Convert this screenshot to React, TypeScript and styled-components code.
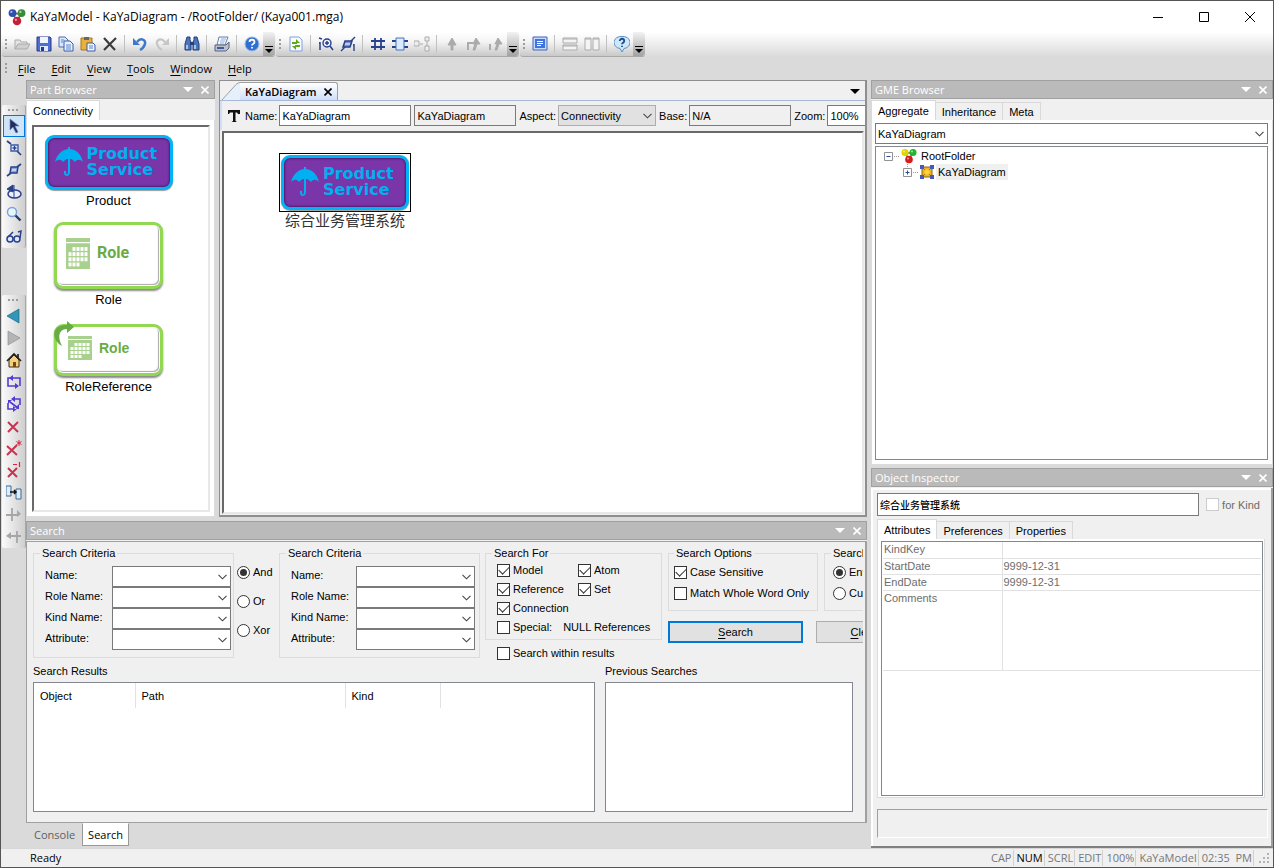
import React from 'react';
import styled, { createGlobalStyle, css } from 'styled-components';

const uiFont = '"Open Sans", "Noto Sans", "Noto Sans CJK SC", sans-serif';
const formFont = '"Liberation Sans", "Noto Sans CJK SC", sans-serif';

const Global = createGlobalStyle`
  * { box-sizing: border-box; }
  body { margin: 0; background: #dadada; color: #000; font: 11px/16px ${formFont}; }
  button, input, select, textarea { font: inherit; color: inherit; margin: 0; }
  button { border: 0; padding: 0; background: none; }
  svg { flex: none; }
  u { text-underline-offset: 2px; }
`;

/* ---------- frame ---------- */

const Frame = styled.div`
  display: flex;
  flex-direction: column;
  min-height: 100vh;
  border: 1px solid #555;
  background: #dadada;
`;
const TitleBar = styled.header`
  display: flex;
  align-items: center;
  height: 31px;
  padding-left: 7px;
  background: #fff;
  font: 12px/16px ${uiFont};
`;
const Title = styled.h1`
  flex: 1;
  margin: 0 0 0 4px;
  font: inherit;
`;
const CaptionButton = styled.button`
  display: grid;
  place-items: center;
  width: 46px;
  height: 30px;
`;
const ToolRow = styled.div`
  display: flex;
  gap: 1px;
  height: 25px;
  padding-left: 1px;
  background: linear-gradient(#fff, #dadada);
`;
const ToolStrip = styled.div<{ $vertical?: boolean }>`
  display: flex;
  align-items: center;
  ${p => p.$vertical ? css`
    flex-direction: column;
    width: 24px;
    padding-bottom: 1px;
    margin-bottom: 47px;
    border-radius: 2px;
    border-right: 1px solid #a8a8a8;
    background: linear-gradient(90deg, #fafafa, #cfcfcf);
  ` : css`
    height: 25px;
    border-radius: 3px;
    border-bottom: 1px solid #a8a8a8;
    background: linear-gradient(#fff, #f4f4f4 40%, #c9c9c9);
  `}
`;
const Grip = styled.span<{ $vertical?: boolean }>`
  ${p => p.$vertical
    ? 'width: 11px; height: 2px; margin: 4px 0; background: repeating-linear-gradient(90deg, #9c9c9c 0 2px, transparent 2px 4px);'
    : 'width: 2px; height: 11px; margin: 0 4px 0 3px; background: repeating-linear-gradient(#9c9c9c 0 2px, transparent 2px 4px);'}
`;
const ToolButton = styled.button<{ $active?: boolean }>`
  display: grid;
  place-items: center;
  width: 22px;
  height: 22px;
  ${p => p.$active && 'border: 1px solid #0078d7; background: #cfe4f7;'}
`;
const Divider = styled.span`
  width: 1px;
  height: 18px;
  margin: 0 4px 0 3px;
  background: #c0c0c0;
`;
const Overflow = styled.button`
  display: flex;
  align-items: flex-end;
  justify-content: center;
  align-self: stretch;
  width: 12px;
  padding-bottom: 2px;
  border-radius: 0 4px 4px 0;
  background: linear-gradient(#f2f2f2, #a2a2a2);
`;
const MenuBar = styled.nav`
  display: flex;
  align-items: center;
  height: 23px;
  padding-left: 1px;
  font: 11px/16px ${uiFont};
`;
const MenuItem = styled.button`
  padding: 0 7px;
  margin-right: 2px;
`;
const Workspace = styled.main`
  flex: 1;
  display: grid;
  grid-template-columns: 25px minmax(0, 845fr) minmax(0, 402fr);
  grid-template-rows: minmax(0, 1fr);
`;
const Rail = styled.aside`
  padding: 25px 0 0 1px;
`;
const Center = styled.div`
  display: flex;
  flex-direction: column;
  min-width: 0;
  margin-right: 4px;
`;
const Upper = styled.div`
  flex: 1;
  display: flex;
  gap: 4px;
  margin-bottom: 4px;
`;
const Right = styled.div`
  display: flex;
  flex-direction: column;
  gap: 3px;
  min-width: 0;
`;

/* ---------- panels ---------- */

const Panel = styled.section<{ $width?: number; $grow?: boolean }>`
  display: flex;
  flex-direction: column;
  min-width: 0;
  ${p => p.$width && `width: ${p.$width}px; flex: none;`}
  ${p => p.$grow && 'flex: 1;'}
  background: #f0f0f0;
`;
const PanelHead = styled.div`
  display: flex;
  align-items: center;
  gap: 5px;
  height: 19px;
  padding: 0 3px;
  border: 1px solid #a0a0a0;
  background: #bababa;
  color: #fff;
  font: 11px/16px ${uiFont};
`;
const PanelTitle = styled.h2`
  flex: 1;
  margin: 0;
  font: inherit;
`;
const HeadButton = styled.button`
  display: grid;
  place-items: center;
  width: 12px;
  height: 14px;
`;
const TabRow = styled.div`
  display: flex;
  align-items: flex-end;
  height: 21px;
`;
const Tab = styled.button<{ $on?: boolean }>`
  height: ${p => (p.$on ? 20 : 18)}px;
  padding: 0 6px;
  border: 1px solid #d9d9d9;
  border-left-width: ${p => (p.$on ? 1 : 0)}px;
  border-bottom: 0;
  background: ${p => (p.$on ? '#fff' : '#f0f0f0')};
  white-space: nowrap;
`;
const TabPage = styled.div`
  flex: 1;
  display: flex;
  flex-direction: column;
  min-width: 0;
  gap: 2px;
  padding: 3px 4px 4px 3px;
  border: 1px solid #dcdcdc;
  border-top: 0;
  background: #fff;
`;
const PartList = styled.div`
  flex: 1;
  display: flex;
  flex-direction: column;
  align-items: center;
  margin: 2px 0 0 2px;
  padding: 8px 25px 0 0;
  border: 2px solid #e8e8e8;
  border-top-color: #696969;
  border-left-color: #696969;
  background: #fff;
`;
const Part = styled.figure`
  display: flex;
  flex-direction: column;
  align-items: center;
  margin: 0 0 12px;
`;
const PartName = styled.figcaption`
  margin-top: 2px;
  font: 13px/18px ${formFont};
`;

/* ---------- model tiles ---------- */

const ProductBox = styled.div`
  display: flex;
  align-items: center;
  gap: 4px;
  width: 128px;
  height: 55px;
  padding: 0 0 2px 7px;
  border: 3px solid #00b4f5;
  border-radius: 9px;
  background: #7a35a8;
  box-shadow: inset 0 0 2px 1px #4c1c74, 0 1px 1px #999;
  color: #00b0f0;
  font: bold 16px/16px "DejaVu Sans", sans-serif;
`;
const RoleBox = styled.div<{ $ref?: boolean }>`
  display: flex;
  align-items: center;
  gap: ${p => (p.$ref ? 7 : 7)}px;
  width: 109px;
  height: ${p => (p.$ref ? 52 : 67)}px;
  padding: ${p => (p.$ref ? '0 0 5px 11px' : '0 0 5px 9px')};
  border: 3px solid #92d850;
  border-radius: 9px;
  background: #fff;
  box-shadow: inset 0 0 0 1px #fff, inset -1px -1px 1px 1px #aaa, 0 2px 2px #888;
  color: #69ab45;
  font: ${p => (p.$ref ? 'bold 14px/16px "Liberation Sans"' : 'bold 16px/18px Roboto')}, sans-serif;
`;
const RefWrap = styled.div`
  position: relative;
  padding-top: 3px;
`;
const RefArrow = styled.svg`
  position: absolute;
  left: 0;
  top: 0;
`;

const ProductTile = () => (
  <ProductBox>
    <svg width="28" height="30" viewBox="0 0 28 30" aria-hidden="true">
      <path fill="#00b0f0" d="M0 15C2 7 7 3 13 2V0h2v2c7 1 11 5 13 13-3-3-6-3-8 0-2-2-3-3-5-3v13c0 5-6 5-6 1v-2h2v2c0 2 2 2 2-1V12c-2 0-3 1-5 3-2-3-5-3-8 0z" />
    </svg>
    <span>Product<br />Service</span>
  </ProductBox>
);
const CalendarIcon = ({ tall }: { tall?: boolean }) => (
  <svg width="24" height={tall ? 31 : 24} viewBox="0 0 24 24" preserveAspectRatio="none" aria-hidden="true">
    <path fill="#a9d18e" d="M0 0h24v3H0zM0 4h24v20H0z" />
    <g fill="#fff">
      {[0, 1, 2, 3].map(r => [0, 1, 2, 3, 4].map(c =>
        (r === 0 && c === 0) || (r === 3 && c > 2) ? null : <rect key={`${r}${c}`} x={2.5 + c * 4} y={7 + r * 4} width="3" height="3" />))}
    </g>
  </svg>
);

/* ---------- editor ---------- */

const Editor = styled.section`
  flex: 1;
  display: flex;
  flex-direction: column;
  min-width: 0;
  border: 1px solid #8f8f8f;
  border-width: 1px 2px 2px 1px;
  background: #f0f0f0;
`;
const EditorTabs = styled.div`
  display: flex;
  align-items: flex-end;
  height: 20px;
  border-bottom: 1px solid #a8b8d8;
`;
const EditorTab = styled.button`
  display: flex;
  align-items: center;
  gap: 7px;
  height: 18px;
  padding: 0 5px;
  border: 1px solid #a0a0a0;
  border-width: 1px 1px 0 0;
  border-radius: 0 3px 0 0;
  background: linear-gradient(#fff, #cfdff8);
  font: 600 11px/16px ${uiFont};
`;
const EditorMenu = styled.button`
  display: grid;
  place-items: center;
  width: 20px;
  height: 18px;
  margin-left: auto;
`;
const EditorBar = styled.div`
  display: flex;
  align-items: center;
  gap: 3px;
  height: 29px;
  padding-left: 6px;
  border-left: 2px solid #cfdff8;
  overflow: hidden;
  white-space: nowrap;
`;
const Field = styled.label`
  display: flex;
  align-items: center;
  gap: 2px;
  flex: none;
`;
const TextBox = styled.input<{ $width?: number; $dim?: boolean; $height?: number }>`
  ${p => (p.$width ? `flex: none; width: ${p.$width}px;` : 'flex: 1; min-width: 0;')}
  height: ${p => p.$height ?? 21}px;
  padding: 0 2px;
  border: 1px solid #7a7a7a;
  border-radius: 0;
  background: ${p => (p.$dim ? '#f0f0f0' : '#fff')};
`;
const ObjectName = styled(TextBox)`
  font-size: 10px;
  font-weight: 500;
`;
const Canvas = styled.div`
  flex: 1;
  position: relative;
  margin: 1px 1px 1px 2px;
  border: 2px solid #e8e8e8;
  border-top-color: #696969;
  border-left-color: #696969;
  background: #fff;
`;
const CanvasNode = styled.figure`
  position: absolute;
  left: 55px;
  top: 20px;
  display: flex;
  flex-direction: column;
  align-items: center;
  margin: 0;
`;
const NodeFrame = styled.div`
  padding: 1px 1px 0;
  border: 1px solid #000;
  height: 59px;
`;
const NodeName = styled.figcaption`
  font: 15px/16px "Noto Sans CJK SC", sans-serif;
  color: #333;
`;

/* ---------- form controls ---------- */

const ComboWrap = styled.span<{ $width?: number }>`
  display: grid;
  align-items: center;
  width: ${p => (p.$width ? p.$width + 'px' : '100%')};
  > * { grid-area: 1 / 1; }
  > svg { justify-self: end; margin-right: 4px; pointer-events: none; }
`;
const ComboBox = styled.select<{ $gray?: boolean }>`
  appearance: none;
  width: 100%;
  height: 21px;
  padding: 0 2px;
  border: 1px solid ${p => (p.$gray ? '#adadad' : '#7a7a7a')};
  border-radius: 0;
  background: ${p => (p.$gray ? '#e1e1e1' : '#fff')};
`;
const Combo = ({ value = '', width, gray, label }: { value?: string; width?: number; gray?: boolean; label?: string }) => (
  <ComboWrap $width={width}>
    <ComboBox $gray={gray} aria-label={label} defaultValue={value}><option>{value}</option></ComboBox>
    <svg width="9" height="6" viewBox="0 0 9 6" aria-hidden="true"><path d="M.5.8l4 4 4-4" fill="none" stroke="#444" strokeWidth="1.1" /></svg>
  </ComboWrap>
);
const CheckLabel = styled.label<{ $dim?: boolean }>`
  display: flex;
  align-items: center;
  gap: 3px;
  flex: none;
  white-space: nowrap;
  color: ${p => (p.$dim ? '#6d6d6d' : '#000')};
`;
const Tick = styled.input`
  appearance: none;
  display: grid;
  place-items: center;
  flex: none;
  width: 13px;
  height: 13px;
  border: 1px solid #333;
  background: #fff;
  &:disabled { border-color: #ccc; }
  &[type='radio'] { border-radius: 50%; }
  &[type='radio']:checked::after { content: ''; width: 7px; height: 7px; border-radius: 50%; background: #333; }
  &[type='checkbox']:checked::after {
    content: '';
    width: 9px;
    height: 5px;
    border: solid #333;
    border-width: 0 0 1px 1px;
    transform: translateY(-1px) rotate(-45deg);
  }
`;
const Check = ({ children, on, radio, name, dim }: { children: React.ReactNode; on?: boolean; radio?: boolean; name?: string; dim?: boolean }) => (
  <CheckLabel $dim={dim}>
    <Tick type={radio ? 'radio' : 'checkbox'} defaultChecked={on} name={name} disabled={dim} />{children}
  </CheckLabel>
);

/* ---------- search ---------- */

const SearchBody = styled.div`
  padding: 4px 2px 10px 6px;
  border: 1px solid #a0a0a0;
  border-right-width: 2px;
  margin-top: 1px;
`;
const SearchForm = styled.form`
  display: flex;
  align-items: flex-start;
  height: 117px;
  overflow: hidden;
`;
const Group = styled.fieldset<{ $width: number; $height: number; $pad?: number; $end?: number; $inset?: number }>`
  flex: none;
  width: ${p => p.$width}px;
  height: ${p => p.$height}px;
  margin: 0 0 0 ${p => p.$inset ?? 0}px;
  padding: 0 ${p => p.$end ?? 2}px 0 ${p => p.$pad ?? 11}px;
  border: 1px solid #dcdcdc;
`;
const Legend = styled.legend<{ $shift?: number }>`
  margin-left: ${p => -(p.$shift ?? 0)}px;
  padding: 0 2px;
  line-height: 14px;
  white-space: nowrap;
`;
const CriteriaList = styled.div`
  padding-top: 6px;
`;
const CriteriaRow = styled.label`
  display: flex;
  justify-content: space-between;
  height: 21px;
  line-height: 19px;
`;
const Joiners = styled.div`
  display: flex;
  flex: none;
  flex-direction: column;
  gap: 13px;
  width: 45px;
  padding: 18px 0 0 3px;
`;
const Stack = styled.div<{ $left?: number }>`
  flex: none;
  margin-left: ${p => p.$left ?? 0}px;
`;
const KindGrid = styled.div`
  display: grid;
  grid-template-columns: 81px 1fr;
  grid-auto-rows: 18px;
  align-items: center;
  row-gap: 1px;
  padding-top: 1px;
`;
const SpecialRow = styled.div`
  grid-column: 1 / 3;
  display: flex;
  gap: 11px;
`;
const OptionStack = styled.div`
  display: flex;
  flex-direction: column;
  gap: 5px;
  padding-top: 4px;
`;
const PushButton = styled.button<{ $primary?: boolean }>`
  display: block;
  width: 135px;
  height: 22px;
  margin-top: 10px;
  border: ${p => (p.$primary ? '2px solid #0078d7' : '1px solid #adadad')};
  background: #e1e1e1;
`;
const Within = styled.div`
  padding: 5px 0 0 12px;
`;
const Lists = styled.div`
  display: grid;
  grid-template-columns: 562fr 248fr;
  column-gap: 10px;
  margin-right: 10px;
`;
const ListTitle = styled.h3`
  margin: 0;
  padding-bottom: 3px;
  font: inherit;
`;
const ListBox = styled.div`
  height: 130px;
  border: 1px solid #828790;
  background: #fff;
`;
const ResultTable = styled.table`
  border-collapse: collapse;
  th { height: 25px; padding: 0 6px; border-right: 1px solid #e2e2e2; font-weight: normal; text-align: left; }
`;
const BottomTabs = styled.div`
  display: flex;
  height: 25px;
  padding: 0 0 2px 1px;
  font: 11px/16px ${uiFont};
`;
const BottomTab = styled.button<{ $on?: boolean }>`
  padding: 0 5px;
  ${p => (p.$on ? 'border: 1px solid #999; border-top-color: #fff; background: #fff;' : 'color: #606060; padding: 0 7px;')}
`;

/* ---------- browser and inspector ---------- */

const Tree = styled.ul`
  flex: 1;
  margin: 0;
  padding: 1px 0 0 8px;
  border: 1px solid #828790;
  background: #fff;
  list-style: none;
`;
const TreeRow = styled.li<{ $depth: number }>`
  display: flex;
  align-items: center;
  height: 16px;
  padding-left: ${p => p.$depth * 19}px;
`;
const TreeName = styled.span<{ $on?: boolean }>`
  margin-left: 2px;
  padding: 0 2px;
  background: ${p => (p.$on ? '#f0f0f0' : 'none')};
`;
const Inspector = styled.div`
  display: flex;
  flex-direction: column;
  margin-top: 1px;
  padding: 5px 3px 8px 6px;
  border-right: 2px solid #a0a0a0;
  border-bottom: 2px solid #808080;
  box-shadow: inset 2px 2px #fff;
`;
const NameRow = styled.div`
  display: flex;
  align-items: center;
  gap: 7px;
  padding-right: 8px;
`;
const InspectorTabs = styled(TabRow)`
  height: 23px;
`;
const InspectorPage = styled(TabPage)`
  height: 259px;
  flex: none;
  padding: 2px 1px 1px 3px;
  margin-right: 3px;
`;
const AttrBox = styled.div`
  flex: 1;
  padding: 0 1px;
  border: 1px solid #828790;
`;
const AttrTable = styled.table`
  width: 100%;
  table-layout: fixed;
  border-collapse: collapse;
  color: #6d6d6d;
  line-height: 14px;
  th, td { height: 16px; padding: 0 2px 1px 1px; border-bottom: 1px solid #e2e2e2; text-align: left; font-weight: normal; vertical-align: top; }
  th { width: 119px; border-right: 1px solid #e2e2e2; }
  tr:last-child th { height: 80px; }
`;
const HelpBox = styled.div`
  height: 29px;
  margin-top: 11px;
  border: 1px solid #fff;
  border-top-color: #a0a0a0;
  border-left-color: #a0a0a0;
`;
const StatusBar = styled.footer`
  display: flex;
  align-items: center;
  height: 19px;
  padding: 0 3px;
  border-top: 1px solid #d7d7d7;
  background: #f0f0f0;
  font: 11px/16px ${uiFont};
  > svg { margin-left: 4px; }
`;
const Ready = styled.span`
  flex: 1;
  padding-left: 26px;
`;
const StatusCell = styled.span<{ $on?: boolean }>`
  padding: 0 1px 0 3px;
  border-right: 1px solid #d0d0d0;
  white-space: pre;
  color: ${p => (p.$on ? '#000' : '#777')};
`;

/* ---------- icons ---------- */

const navy = '#27418a';
const mute = '#ababab';
const glyphs: Record<string, React.ReactNode> = {
  open: <><path d="M1 13V4h5l1 2h6v2" fill="#e4e4e4" stroke={mute} /><path d="M1 13l3-5h12l-3 5z" fill="#cfcfcf" stroke={mute} /></>,
  save: <><path d="M1 1h13l1 1v13H1z" fill="#4f6fd0" stroke="#26388c" /><path d="M4 1h8v6H4z" fill="#f0f4ff" /><path d="M4 10h8v5H4z" fill="#dfe6f8" /><path d="M5 11h3v4H5z" fill="#26388c" /></>,
  copy: <><path d="M1 1h6l3 3v7H1z" fill="#dbe8fb" stroke="#4a6cb0" /><path d="M6 5h6l3 3v7H6z" fill="#e8f1ff" stroke="#3a5ca8" /><path d="M8 9h5M8 11h5M8 13h5M3 4h3M3 6h2" stroke="#5b83d0" /></>,
  paste: <><path d="M1 2h11v12H1z" fill="#e8b13a" stroke="#a8741a" /><path d="M4 1h5v3H4z" fill="#666" /><path d="M7 7h6l2 2v6H7z" fill="#eef4ff" stroke="#3a5ca8" /><path d="M9 10h4M9 12h4" stroke="#5b83d0" /></>,
  del: <path d="M2 2l11 12M14 2L2 14" stroke="#3c3c3c" strokeWidth="2.2" />,
  undo: <><path d="M5 6c4-5 9-2 8 2-1 3-3 5-5 6" fill="none" stroke="#3f78c8" strokeWidth="2.4" /><path d="M1 2v7h7z" fill="#3f78c8" /></>,
  redo: <><path d="M11 6C7 1 2 4 3 8c1 3 3 5 5 6" fill="none" stroke="#c6c6c6" strokeWidth="2.200" /><path d="M15 2v7H8z" fill="#c6c6c6" /></>,
  find: <><path d="M3 1h3v3l1 2v8H1V8zM10 1h3l2 7v6H9V6l1-2z" fill="#4c74b8" stroke="#233f7c" /><path d="M6 6h4v3H6z" fill="#233f7c" /><path d="M3 9v4M11 9v4" stroke="#c6dcff" strokeWidth="1.5" /></>,
  print: <><path d="M5 1h9l-3 8H3z" fill="#f4f8ff" stroke="#6880a8" /><path d="M7 3h5M6 5h5M6 7h4" stroke="#8fb0e0" /><path d="M1 9h11l3-3v6l-3 3H1z" fill="#b9c2cf" stroke="#59657a" /><path d="M3 12h7" stroke="#405a9c" strokeWidth="2" /></>,
  help: <><circle cx="8" cy="8" r="7" fill="#2f6fd0" stroke="#9ab8e6" /><path d="M5.5 6c0-3 5-3 5 0 0 2-2.500 1.500-2.500 3.500M8 11v1.600" fill="none" stroke="#fff" strokeWidth="1.800" /></>,
  refresh: <><path d="M2 1h9l3 3v11H2z" fill="#f8fbff" stroke="#7f9fe0" /><path d="M4 7h5M12 10H7" stroke="#5faa10" strokeWidth="1.800" /><path d="M8 3l4 4H8zM8 14l-4-4h4z" fill="#5faa10" /></>,
  zoomIn: <><path d="M2 6v8M1 7h1M1 2l3 1" stroke={navy} strokeWidth="1.500" /><circle cx="9" cy="7" r="4" fill="#eef" stroke={navy} strokeWidth="1.400" /><path d="M7 7h4M9 5v4M12 10l3 4" stroke={navy} strokeWidth="1.500" /></>,
  zoomOut: <><path d="M14 8v7M13 9h1M15 1l-4 4M5 11l-4 4" stroke={navy} strokeWidth="1.400" /><path d="M5 5h7l-2 6H3z" fill="#8090c8" stroke={navy} strokeWidth="1.500" /><path d="M5 8h5" stroke="#fff" /></>,
  grid: <path d="M5 2v12M11 2v12M1 5h14M1 11h14" stroke={navy} strokeWidth="1.800" />,
  chip: <><path d="M0 5h16M0 11h16" stroke={navy} strokeWidth="1.800" /><path d="M4 2h8v12H4z" fill="#dceaff" stroke="#4370c4" /></>,
  nodes: <path d="M0 5h5v5H0zM11 1h4v4h-4zM11 10h4v5h-4zM6 8h3M13 5v5" fill="#eee" stroke={mute} />,
  up: <path d="M8 2l4 7H9v5H7V9H4z" fill={mute} stroke={mute} />,
  up2: <><path d="M10 2l4 6h-3l-2 6H7l2-6H7z" fill={mute} stroke={mute} /><path d="M2 14V7h5" stroke={mute} strokeWidth="2" /></>,
  up3: <><path d="M10 2l4 6h-3l-2 6H7l2-6H7z" fill={mute} stroke={mute} /><path d="M2 14V8M1 9h2" stroke={mute} strokeWidth="2" /></>,
  full: <><path d="M1 1h14v13H1z" fill="#c5dafc" stroke="#3f62bb" /><path d="M3 3h10v9H3z" fill="#3f74df" /><path d="M5 5.500h6M5 7.500h6M5 9.500h4" stroke="#fff" /></>,
  rows: <path d="M1 2h14v5H1zM1 9h14v5H1zM1 3h14M1 10h14" fill="#f4f4f4" stroke={mute} />,
  cols: <path d="M1 2h6v12H1zM9 2h6v12H9zM1 3h6M9 3h6" fill="#f4f4f4" stroke={mute} />,
  about: <><path d="M8 .5a7 6 0 012 12L8 16l-2-3.500A7 6 0 018 .5z" fill="#cfe7fb" stroke="#5a90c0" /><path d="M5.800 5c0-3 4.400-3 4.400 0 0 2-2.200 1.500-2.200 3.300M8 9.700v1.400" fill="none" stroke="#1b4d90" strokeWidth="1.800" /></>,
  arrow: <path d="M4 1v11l3-3 3 6 2-1-3-6h4z" fill="#222e5c" stroke="#6a82c8" strokeWidth=".7" />,
  zin: <><path d="M1 1l4 3M11 11l4 4" stroke={navy} strokeWidth="1.700" /><path d="M5 5h7v6H5z" fill="#e6eeff" stroke="#3c5aa8" strokeWidth="1.400" /><path d="M6.500 8h4M8.500 6v4" stroke={navy} strokeWidth="1.400" /></>,
  zout: <><path d="M15 2l-4 3M5 11l-4 3" stroke={navy} strokeWidth="1.700" /><path d="M5 5h7l-1 6H4z" fill="#8ea4d8" stroke={navy} strokeWidth="1.400" /><path d="M6 8h4" stroke="#fff" /></>,
  orbit: <><ellipse cx="8.500" cy="10" rx="6.500" ry="4" fill="#eef" stroke={navy} strokeWidth="1.500" /><path d="M8 1v13M3 4l5 3M1 5l6-4v7z" fill={navy} stroke={navy} /></>,
  mag: <><circle cx="6" cy="6" r="4.500" fill="#e8f5ff" stroke="#78a0d8" strokeWidth="1.400" /><path d="M9.500 9.500l5 5" stroke="#243a70" strokeWidth="2.400" /></>,
  glasses: <><circle cx="4" cy="11" r="3" fill="#dfe6fa" stroke={navy} strokeWidth="1.500" /><circle cx="11" cy="11" r="3" fill="#dfe6fa" stroke={navy} strokeWidth="1.500" /><path d="M2 9l5-5M14 10l1-7-3 1" fill="none" stroke={navy} strokeWidth="1.500" /></>,
  back: <path d="M1 8l12-7v14z" fill="#3097b8" stroke="#1c6684" strokeWidth=".7" />,
  fwd: <path d="M14 8L2 1v14z" fill="#b4b4b4" stroke="#888" strokeWidth=".6" />,
  home: <><path d="M3 8v7h10V8L8 3z" fill="#f6cf7c" stroke="#3c2e16" /><path d="M1 9l7-7 7 7M12 2v4" fill="none" stroke="#222" strokeWidth="1.700" /><path d="M7 10h3v5H7z" fill="#774719" /></>,
  loop: <><path d="M6 4h8v8M11 12H2V4h2" fill="none" stroke="#513ad5" strokeWidth="1.600" /><path d="M7 1v6L3 4zM9 9v6l4-3z" fill="#513ad5" /></>,
  loops: <><path d="M9 3h5v6M8 13H2V7M4 6l8 6" fill="none" stroke="#513ad5" strokeWidth="1.600" /><path d="M9 0v6L5 3zM7 10v6l4-3zM2 4h4L2 8zM13 8v5H8z" fill="#513ad5" /></>,
  x1: <path d="M2 4l10 10M12 4L2 14" stroke="#c83350" strokeWidth="2" />,
  x2: <><path d="M1 6l10 9M11 5L1 15" stroke="#c83350" strokeWidth="2" /><path d="M13 0v6M10.500 1.500l5 3M15.500 1.500l-5 3" stroke="#e02040" /></>,
  x3: <><path d="M2 6l9 9M11 6l-9 9" stroke="#c83350" strokeWidth="2" /><path d="M7 2.500h4M13.500 0v5" stroke="#e02040" strokeWidth="1.200" /></>,
  move: <><path d="M0 2h5v10H0zM10 5h5v10h-5z" fill="#dceefe" stroke="#3c6990" /><path d="M4 8h6M8 6l2 2-2 2" stroke="#111" strokeWidth="1.500" /></>,
  cross: <><path d="M0 9h12M6 2v13" stroke="#a6a6a6" strokeWidth="1.800" /><path d="M11 4l4 4-4 3z" fill="#a6a6a6" /></>,
  cross2: <><path d="M3 8h12M11 3v12" stroke="#a6a6a6" strokeWidth="1.800" /><path d="M5 4L0 8l5 3z" fill="#a6a6a6" /></>,
};
const Icon = ({ name }: { name: string }) => (
  <svg width="16" height="16" viewBox="0 0 16 16" fill="none" aria-hidden="true">{glyphs[name]}</svg>
);
const Caret = ({ color = '#fff', width = 10 }: { color?: string; width?: number }) => (
  <svg width={width} height="5" viewBox="0 0 10 5" aria-hidden="true"><path d="M0 0h10L5 5z" fill={color} /></svg>
);
const Cross = ({ color = '#fff', size = 8 }: { color?: string; size?: number }) => (
  <svg width={size} height={size} viewBox="0 0 8 8" aria-hidden="true"><path d="M.5.5l7 7M7.500.5l-7 7" stroke={color} strokeWidth="1.600" /></svg>
);
const Expander = ({ plus }: { plus?: boolean }) => (
  <svg width="17" height="16" viewBox="0 0 17 16" aria-hidden="true">
    <path d="M.5 4.500h8v8h-8z" fill="#fff" stroke="#919191" />
    <path d={plus ? 'M2.500 8.500h4M4.500 6.500v4' : 'M2.500 8.500h4'} stroke="#2b4a9c" />
    <path d={plus ? 'M10 8.500h6M4.500 0v3' : 'M10 8.500h6'} stroke="#999" strokeDasharray="1 1" />
  </svg>
);
const Balls = ({ colors, size = 16 }: { colors: string[]; size?: number }) => (
  <svg width={size} height={size} viewBox="0 0 16 16" aria-hidden="true">
    <path d="M4 5l4 6 4-6z" stroke="#666" strokeWidth="1.500" fill="none" />
    <circle cx="4" cy="4.500" r="3.500" fill={colors[0]} />
    <circle cx="12" cy="4.500" r="3.500" fill={colors[1]} />
    <circle cx="8" cy="11.500" r="3.800" fill={colors[2]} />
    <g fill="#fff" opacity=".6"><circle cx="3" cy="3.500" r="1" /><circle cx="11" cy="3.500" r="1" /><circle cx="7" cy="10.500" r="1" /></g>
  </svg>
);

/* ---------- data ---------- */

const strips = [
  ['open', 'save', 'copy', 'paste', 'del', '|', 'undo', 'redo', '|', 'find', '|', 'print', '|', 'help'],
  ['refresh', '|', 'zoomIn', 'zoomOut', '|', 'grid', 'chip', 'nodes', '|', 'up', 'up2', 'up3'],
  ['full', '|', 'rows', 'cols', '|', 'about'],
];
const rails = [
  ['arrow', 'zin', 'zout', 'orbit', 'mag', 'glasses'],
  ['back', 'fwd', 'home', 'loop', 'loops', 'x1', 'x2', 'x3', 'move', 'cross', 'cross2'],
];
const menus = ['File', 'Edit', 'View', 'Tools', 'Window', 'Help'];
const criteria = ['Name:', 'Role Name:', 'Kind Name:', 'Attribute:'];
const attributes = [['KindKey', ''], ['StartDate', '9999-12-31'], ['EndDate', '9999-12-31'], ['Comments', '']];
const states = ['CAP', 'NUM', 'SCRL', 'EDIT', '100%', 'KaYaModel', '02:35  PM'];

const Head = ({ title }: { title: string }) => (
  <PanelHead>
    <PanelTitle>{title}</PanelTitle>
    <HeadButton aria-label="Panel menu"><Caret /></HeadButton>
    <HeadButton aria-label="Close panel"><Cross /></HeadButton>
  </PanelHead>
);
const Criteria = ({ end }: { end?: number }) => (
  <Group $width={201} $height={112} $end={end}>
    <Legend $shift={5}>Search Criteria</Legend>
    <CriteriaList>
      {criteria.map(c => <CriteriaRow key={c}>{c}<Combo width={119} /></CriteriaRow>)}
    </CriteriaList>
  </Group>
);

export default function App() {
  return (
    <Frame>
      <Global />
      <TitleBar>
        <Balls colors={['#2c4fb0', '#3a8d35', '#c5203a']} size={18} />
        <Title>KaYaModel - KaYaDiagram - /RootFolder/ (Kaya001.mga)</Title>
        <CaptionButton aria-label="Minimize"><svg width="10" height="10"><path d="M0 5.500h10" stroke="#000" /></svg></CaptionButton>
        <CaptionButton aria-label="Maximize"><svg width="10" height="10"><path d="M.5.5h9v9h-9z" fill="none" stroke="#000" /></svg></CaptionButton>
        <CaptionButton aria-label="Close"><svg width="10" height="10"><path d="M0 0l10 10M10 0L0 10" stroke="#000" /></svg></CaptionButton>
      </TitleBar>

      <ToolRow>
        {strips.map((strip, i) => (
          <ToolStrip key={i}>
            <Grip />
            {strip.map((n, j) => n === '|' ? <Divider key={j} /> : <ToolButton key={j} aria-label={n}><Icon name={n} /></ToolButton>)}
            <Overflow aria-label="More"><svg width="8" height="9"><path d="M0 1.500h8" stroke="#000" /><path d="M0 4h8L4 8z" /></svg></Overflow>
          </ToolStrip>
        ))}
      </ToolRow>

      <MenuBar>
        <Grip />
        {menus.map(m => <MenuItem key={m}><u>{m[0]}</u>{m.slice(1)}</MenuItem>)}
      </MenuBar>

      <Workspace>
        <Rail>
          {rails.map((rail, i) => (
            <ToolStrip key={i} $vertical>
              <Grip $vertical />
              {rail.map(n => <ToolButton key={n} aria-label={n} $active={n === 'arrow'}><Icon name={n} /></ToolButton>)}
            </ToolStrip>
          ))}
        </Rail>

        <Center>
          <Upper>
            <Panel $width={189}>
              <Head title="Part Browser" />
              <TabRow><Tab $on>Connectivity</Tab></TabRow>
              <TabPage>
                <PartList>
                  <Part><ProductTile /><PartName>Product</PartName></Part>
                  <Part><RoleBox><CalendarIcon tall />Role</RoleBox><PartName>Role</PartName></Part>
                  <Part>
                    <RefWrap>
                      <RoleBox $ref><CalendarIcon />Role</RoleBox>
                      <RefArrow width="21" height="26" viewBox="0 0 21 26" aria-hidden="true">
                        <path d="M8 25C-3 19-3 3 13 4V0l7 6-7 6V8C5 8 3 16 8 25z" fill="#69ab45" />
                      </RefArrow>
                    </RefWrap>
                    <PartName>RoleReference</PartName>
                  </Part>
                </PartList>
              </TabPage>
            </Panel>

            <Editor>
              <EditorTabs>
                <svg width="20" height="18" viewBox="0 0 20 18" aria-hidden="true">
                  <path d="M2 18L16 2.500Q18 .5 20 .5V18z" fill="#e6effc" /><path d="M2 18L16 2.500Q18 .5 20 .5" fill="none" stroke="#a0a0a0" />
                </svg>
                <EditorTab>KaYaDiagram<Cross color="#000" /></EditorTab>
                <EditorMenu aria-label="Open windows"><Caret color="#000" /></EditorMenu>
              </EditorTabs>
              <EditorBar>
                <svg width="14" height="12" viewBox="0 0 14 12" aria-hidden="true"><path d="M0 0h12v4h-2L9 2.500H7.500V11L9 12H3.500L5 11V2.500H2L1 4H0z" fill="#111" /></svg>
                <Field>Name:<TextBox $width={132} defaultValue="KaYaDiagram" /></Field>
                <TextBox $width={102} $dim readOnly aria-label="Kind" defaultValue="KaYaDiagram" />
                <Field>Aspect:<Combo width={98} gray value="Connectivity" /></Field>
                <Field>Base:<TextBox $width={102} $dim readOnly defaultValue="N/A" /></Field>
                <Field>Zoom:<TextBox $width={50} defaultValue="100%" /></Field>
              </EditorBar>
              <Canvas>
                <CanvasNode>
                  <NodeFrame><ProductTile /></NodeFrame>
                  <NodeName>综合业务管理系统</NodeName>
                </CanvasNode>
              </Canvas>
            </Editor>
          </Upper>

          <Panel>
            <Head title="Search" />
            <SearchBody>
              <SearchForm onSubmit={e => e.preventDefault()}>
                <Criteria />
                <Joiners>
                  <Check radio name="join" on>And</Check>
                  <Check radio name="join">Or</Check>
                  <Check radio name="join">Xor</Check>
                </Joiners>
                <Criteria end={4} />
                <Stack $left={5}>
                  <Group $width={177} $height={94}>
                    <Legend $shift={5}>Search For</Legend>
                    <KindGrid>
                      <Check on>Model</Check><Check on>Atom</Check>
                      <Check on>Reference</Check><Check on>Set</Check>
                      <Check on>Connection</Check><span />
                      <SpecialRow><Check>Special:</Check><span>NULL References</span></SpecialRow>
                    </KindGrid>
                  </Group>
                  <Within><Check>Search within results</Check></Within>
                </Stack>
                <Stack $left={6}>
                  <Group $width={150} $height={65} $pad={5}>
                    <Legend>Search Options</Legend>
                    <OptionStack>
                      <Check on>Case Sensitive</Check>
                      <Check>Match Whole Word Only</Check>
                    </OptionStack>
                  </Group>
                  <PushButton $primary><u>S</u>earch</PushButton>
                </Stack>
                <Stack $left={-2}>
                  <Group $width={150} $height={65} $pad={8} $inset={8}>
                    <Legend $shift={2}>Search In</Legend>
                    <OptionStack>
                      <Check radio name="scope" on>Entire Project</Check>
                      <Check radio name="scope">Current Model</Check>
                    </OptionStack>
                  </Group>
                  <PushButton><u>C</u>lear Results</PushButton>
                </Stack>
              </SearchForm>
              <Lists>
                <ListTitle>Search Results</ListTitle>
                <ListTitle>Previous Searches</ListTitle>
                <ListBox>
                  <ResultTable>
                    <colgroup><col width="101" /><col width="210" /><col width="95" /></colgroup>
                    <thead><tr><th>Object</th><th>Path</th><th>Kind</th></tr></thead>
                  </ResultTable>
                </ListBox>
                <ListBox />
              </Lists>
            </SearchBody>
          </Panel>
          <BottomTabs>
            <BottomTab>Console</BottomTab>
            <BottomTab $on>Search</BottomTab>
          </BottomTabs>
        </Center>

        <Right>
          <Panel $grow>
            <Head title="GME Browser" />
            <TabRow><Tab $on>Aggregate</Tab><Tab>Inheritance</Tab><Tab>Meta</Tab></TabRow>
            <TabPage>
              <Combo value="KaYaDiagram" label="Model" />
              <Tree>
                <TreeRow $depth={0}><Expander /><Balls colors={['#e2d400', '#20b52c', '#d81a1a']} /><TreeName>RootFolder</TreeName></TreeRow>
                <TreeRow $depth={1}>
                  <Expander plus />
                  <svg width="14" height="14" viewBox="0 0 14 14" aria-hidden="true">
                    <path d="M2 2h10v10H2z" fill="#f0b51c" stroke="#8a6510" /><path d="M2 2l10 10M12 2L2 12" stroke="#a87a14" /><circle cx="7" cy="7" r="2.500" fill="#ffd048" />
                    <path d="M0 0h4v4H0zM10 0h4v4h-4zM0 10h4v4H0zM10 10h4v4h-4z" fill="#4858b8" />
                  </svg>
                  <TreeName $on>KaYaDiagram</TreeName>
                </TreeRow>
              </Tree>
            </TabPage>
          </Panel>

          <Panel>
            <Head title="Object Inspector" />
            <Inspector>
              <NameRow>
                <ObjectName $height={23} aria-label="Object name" defaultValue="综合业务管理系统" />
                <Check dim>for Kind</Check>
              </NameRow>
              <InspectorTabs><Tab $on>Attributes</Tab><Tab>Preferences</Tab><Tab>Properties</Tab></InspectorTabs>
              <InspectorPage>
                <AttrBox>
                  <AttrTable>
                    <tbody>{attributes.map(([k, v]) => <tr key={k}><th scope="row">{k}</th><td>{v}</td></tr>)}</tbody>
                  </AttrTable>
                </AttrBox>
              </InspectorPage>
              <HelpBox />
            </Inspector>
          </Panel>
        </Right>
      </Workspace>

      <StatusBar>
        <Ready>Ready</Ready>
        {states.map(s => <StatusCell key={s} $on={s === 'NUM'}>{s}</StatusCell>)}
        <svg width="12" height="12" viewBox="0 0 12 12" aria-hidden="true"><path d="M9 1h2v2H9zM9 5h2v2H9zM5 5h2v2H5zM9 9h2v2H9zM5 9h2v2H5zM1 9h2v2H1z" fill="#b4b4b4" /></svg>
      </StatusBar>
    </Frame>
  );
}
